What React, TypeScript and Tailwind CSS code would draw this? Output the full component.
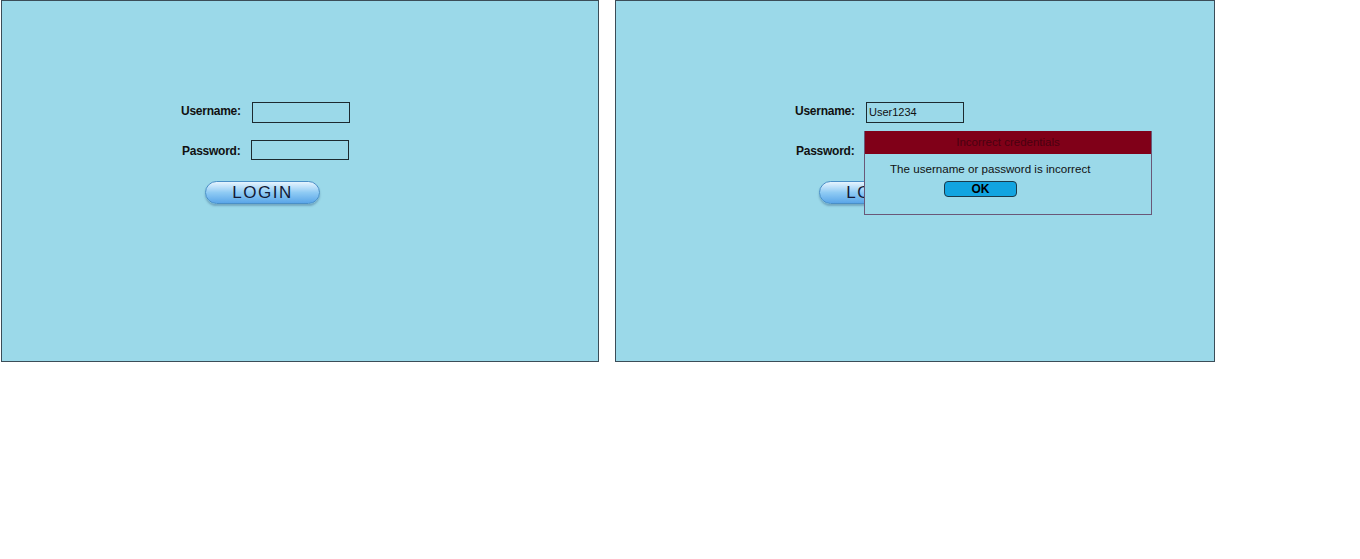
import React from 'react';

function LoginForm({ username }: { username?: string }) {
  return (
    <div className="pt-[101px] pl-[179px]">
      <div className="flex items-center h-[21px]">
        <span className="w-[71px] pb-[3px] text-[12px] tracking-[-0.25px] font-bold text-[#111]">Username:</span>
        <div className="w-[98px] h-[21px] border border-[#1c2a30] px-[2px] text-[11px] leading-[19px] text-[#111]">
          {username}
        </div>
      </div>
      <div className="flex items-center h-[20px] mt-[17px]">
        <span className="w-[70px] pl-[1px] pt-[1px] text-[12px] tracking-[-0.25px] font-bold text-[#111]">Password:</span>
        <div className="w-[98px] h-[20px] border border-[#1c2a30]" />
      </div>
      <button className="mt-[21px] ml-[24px] w-[115px] h-[23px] rounded-full border border-[#4a8fc7] bg-gradient-to-b from-[#e6f4fe] via-[#8fcbf4] to-[#5aa6e8] shadow-[0_2px_2px_rgba(40,80,120,0.35)] text-[17px] leading-[21px] tracking-[1.5px] text-[#141a35]">
        LOGIN
      </button>
    </div>
  );
}

export default function App() {
  return (
    <div className="w-[1360px] h-[559px] bg-white font-['Liberation_Sans',Arial,sans-serif] flex items-start gap-[16px] pl-[1px]">
      <div className="w-[598px] h-[362px] border border-[#3b4d58] bg-[#9bd9e9]">
        <LoginForm />
      </div>
      <div className="relative w-[600px] h-[362px] border border-[#3b4d58] bg-[#9bd9e9]">
        <LoginForm username="User1234" />
        <div className="absolute left-[248px] top-[130px] w-[288px] h-[84px] border border-[#6a5878] border-t-0 bg-[#9bd9e9]">
          <div className="h-[23px] bg-[#800018] text-center text-[11.5px] leading-[23px] text-[#4a0010]">
            Incorrect credentials
          </div>
          <div className="pl-[25px] pt-[8px] text-[11.6px] leading-[14px] text-[#111]">
            The username or password is incorrect
          </div>
          <div className="pl-[79px] pt-[5px]">
            <div className="w-[73px] h-[16px] rounded-[4px] border border-[#1b3a4a] bg-[#12a4e0] text-center text-[12px] font-bold leading-[14px] text-black">
              OK
            </div>
          </div>
        </div>
      </div>
    </div>
  );
}
